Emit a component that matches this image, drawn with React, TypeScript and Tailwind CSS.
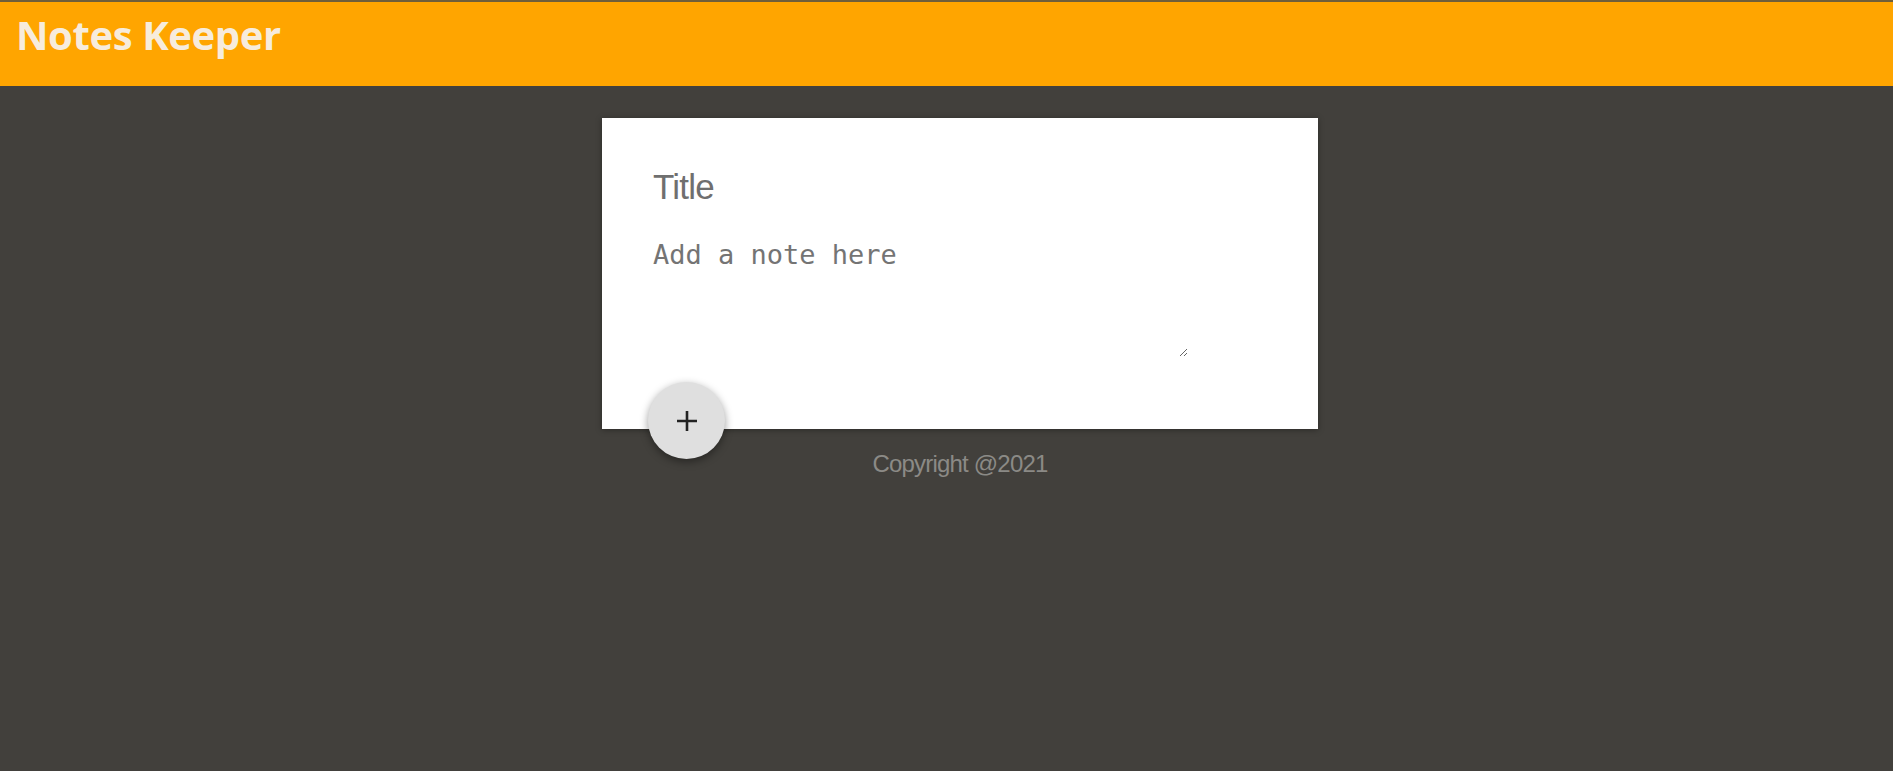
import { useState } from "react"

const Header = () => (
    <header className="h-[86px] border-t-2 border-[#6f5e3a] bg-[#ffa500] px-[16px] pt-[4px]">
        <h1 className="text-[40px] leading-[57px] font-bold tracking-[-0.4px] text-[#f7ecdc] [font-family:'Comic_Sans_MS','Open_Sans',sans-serif]">
            Notes Keeper
        </h1>
    </header>
)

const CreateArea = () => {
    const [note, setNote] = useState({ title: "", content: "" })

    const handleChange = (e: any) => {
        const { name, value } = e.target
        setNote(prev => ({ ...prev, [name]: value }))
    }

    return (
        <form className="relative w-[716px] h-[311px] bg-white shadow-[0_1px_6px_rgba(0,0,0,0.35)] pl-[51px] pt-[49px]">
            <input
                name="title"
                value={note.title}
                onChange={handleChange}
                placeholder="Title"
                className="block w-[540px] h-[40px] text-[35px] tracking-[-0.8px] text-[#6f6f6f] placeholder:text-[#6f6f6f] outline-none [font-family:'Liberation_Sans',Arial,sans-serif]"
            />
            <textarea
                name="content"
                value={note.content}
                onChange={handleChange}
                placeholder="Add a note here"
                className="block mt-[28px] w-[535px] h-[122px] p-0 text-[27px] text-[#747474] placeholder:text-[#747474] outline-none [font-family:'DejaVu_Sans_Mono',monospace]"
            />
            <button
                type="button"
                className="absolute left-[46px] bottom-[-30px] w-[77px] h-[77px] rounded-full bg-[#dfdfdf] shadow-[0_3px_8px_rgba(0,0,0,0.4)] flex items-center justify-center"
            >
                <svg width="22" height="22" viewBox="0 0 22 22">
                    <path d="M11 1v20M1 11h20" stroke="#222" strokeWidth="2.6" />
                </svg>
            </button>
        </form>
    )
}

export default function App() {
    return (
        <div className="min-h-[771px] bg-[#42403c]">
            <Header />
            <main className="flex flex-col items-center pl-[27px] pt-[32px]">
                <CreateArea />
                <footer className="mt-[17px] text-[24px] tracking-[-0.8px] text-[#8b8a86] [font-family:'Liberation_Sans',Arial,sans-serif]">
                    Copyright @2021
                </footer>
            </main>
        </div>
    )
}
